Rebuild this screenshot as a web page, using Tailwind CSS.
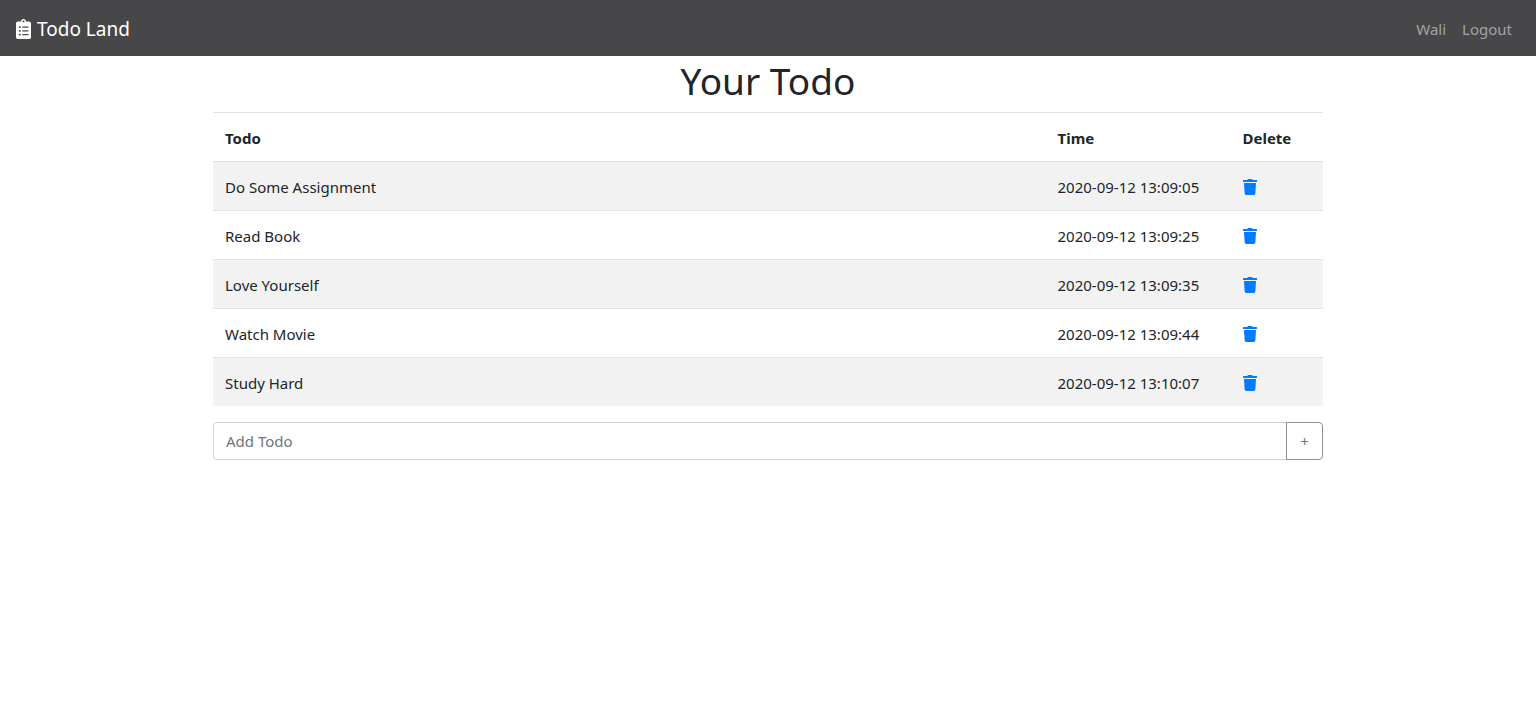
<!DOCTYPE html>
<html lang="en">
<head>
<meta charset="utf-8">
<meta name="viewport" content="width=device-width, initial-scale=1">
<title>Todo Land</title>
<script src="https://cdn.jsdelivr.net/npm/@tailwindcss/browser@4"></script>
</head>
<body class="bg-white font-['Noto_Sans','Open_Sans',sans-serif] text-[15px] leading-6 text-[#212529]">
<svg class="hidden" aria-hidden="true">
  <symbol id="trash" viewBox="0 0 448 512"><path fill="currentColor" d="M432 32H312l-9.4-18.7A24 24 0 0 0 281.1 0H166.8a23.72 23.72 0 0 0-21.4 13.3L136 32H16A16 16 0 0 0 0 48v32a16 16 0 0 0 16 16h416a16 16 0 0 0 16-16V48a16 16 0 0 0-16-16zM53.2 467a48 48 0 0 0 47.9 45h245.8a48 48 0 0 0 47.9-45L416 128H32z"/></symbol>
</svg>
<nav class="flex h-14 items-center justify-between bg-[#474749] px-4 pt-0.5">
  <a href="#" class="flex items-center gap-[6px] text-[19px] leading-8 text-white">
    <svg class="h-5 w-[15px]" viewBox="0 0 384 512" aria-hidden="true"><path fill="currentColor" d="M336 64h-80c0-35.3-28.7-64-64-64s-64 28.7-64 64H48C21.5 64 0 85.5 0 112v352c0 26.500 21.500 48 48 48h288c26.500 0 48-21.500 48-48V112c0-26.500-21.500-48-48-48zM96 424c-13.300 0-24-10.700-24-24s10.700-24 24-24 24 10.700 24 24-10.700 24-24 24zm0-96c-13.300 0-24-10.700-24-24s10.700-24 24-24 24 10.700 24 24-10.700 24-24 24zm0-96c-13.300 0-24-10.700-24-24s10.700-24 24-24 24 10.700 24 24-10.700 24-24 24zm96-192c13.300 0 24 10.700 24 24s-10.700 24-24 24-24-10.700-24-24 10.700-24 24-24zm128 368c0 4.400-3.600 8-8 8H168c-4.400 0-8-3.600-8-8v-16c0-4.400 3.600-8 8-8h144c4.400 0 8 3.600 8 8v16zm0-96c0 4.400-3.600 8-8 8H168c-4.400 0-8-3.600-8-8v-16c0-4.400 3.600-8 8-8h144c4.400 0 8 3.600 8 8v16zm0-96c0 4.400-3.600 8-8 8H168c-4.400 0-8-3.600-8-8v-16c0-4.400 3.600-8 8-8h144c4.400 0 8 3.600 8 8v16z"/></svg>
    Todo Land
  </a>
  <div class="flex gap-4 px-2 text-[#a3a3a4]">
    <a href="#">Wali</a>
    <a href="#">Logout</a>
  </div>
</nav>
<main class="mx-auto max-w-[1140px] px-[15px]">
  <h1 class="pt-px pb-[7px] text-center text-[37px] leading-12">Your Todo</h1>
  <table class="mb-4 w-full table-fixed border-separate border-spacing-0 text-left [&_td]:border-t [&_td]:border-[#dee2e6] [&_td]:px-3 [&_td]:pt-[13px] [&_td]:pb-[11px] [&_th]:border-t [&_th]:border-[#dee2e6] [&_th]:px-3 [&_th]:pt-[13px] [&_th]:pb-[11px]">
    <thead>
      <tr><th class="w-9/12">Todo</th><th class="w-2/12">Time</th><th class="w-1/12">Delete</th></tr>
    </thead>
    <tbody>
      <tr class="odd:bg-[#f2f2f2]"><td>Do Some Assignment</td><td>2020-09-12 13:09:05</td><td><a href="#" aria-label="Delete Do Some Assignment" class="flex h-6 items-center text-[#007bff]"><svg class="h-4 w-[14px]"><use href="#trash"/></svg></a></td></tr>
      <tr class="odd:bg-[#f2f2f2]"><td>Read Book</td><td>2020-09-12 13:09:25</td><td><a href="#" aria-label="Delete Read Book" class="flex h-6 items-center text-[#007bff]"><svg class="h-4 w-[14px]"><use href="#trash"/></svg></a></td></tr>
      <tr class="odd:bg-[#f2f2f2]"><td>Love Yourself</td><td>2020-09-12 13:09:35</td><td><a href="#" aria-label="Delete Love Yourself" class="flex h-6 items-center text-[#007bff]"><svg class="h-4 w-[14px]"><use href="#trash"/></svg></a></td></tr>
      <tr class="odd:bg-[#f2f2f2]"><td>Watch Movie</td><td>2020-09-12 13:09:44</td><td><a href="#" aria-label="Delete Watch Movie" class="flex h-6 items-center text-[#007bff]"><svg class="h-4 w-[14px]"><use href="#trash"/></svg></a></td></tr>
      <tr class="odd:bg-[#f2f2f2]"><td>Study Hard</td><td>2020-09-12 13:10:07</td><td><a href="#" aria-label="Delete Study Hard" class="flex h-6 items-center text-[#007bff]"><svg class="h-4 w-[14px]"><use href="#trash"/></svg></a></td></tr>
    </tbody>
  </table>
  <form class="flex">
    <input type="text" aria-label="Add Todo" placeholder="Add Todo" class="h-[38px] min-w-0 flex-1 rounded-l border border-[#ced4da] px-3 placeholder:text-[#6c757d]">
    <button type="button" aria-label="Add" class="-ml-px h-[38px] w-[37px] rounded-r border border-[#868e96] text-[15px] text-[#6c757d]">+</button>
  </form>
</main>
</body>
</html>
